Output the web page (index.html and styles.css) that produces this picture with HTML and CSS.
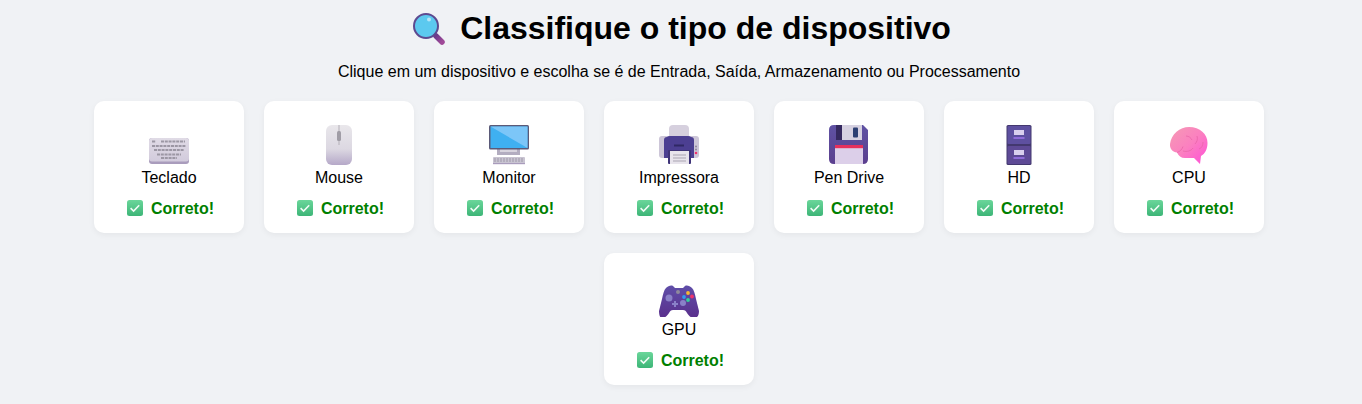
FILE: index.html

```html
<!DOCTYPE html>
<html lang="pt-BR">
<head>
    <meta charset="UTF-8">
    <title>Classifique o tipo de dispositivo</title>
    <meta name="viewport" content="width=device-width, initial-scale=1.0">
    <link rel="stylesheet" href="styles.css">
</head>
<body>
    <svg class="defs" aria-hidden="true">
        <defs>
            <linearGradient id="gCheck" x1="0" y1="0" x2="0" y2="1"><stop offset="0" stop-color="#6ad69a"/><stop offset="1" stop-color="#3db577"/></linearGradient>
            <linearGradient id="gKey" x1="0" y1="0" x2="0" y2="1"><stop offset="0" stop-color="#e0dbe6"/><stop offset="1" stop-color="#d2cbdc"/></linearGradient>
            <linearGradient id="gMouse" x1="0" y1="0" x2="0" y2="1"><stop offset="0" stop-color="#e9e7eb"/><stop offset=".6" stop-color="#dcd8e2"/><stop offset="1" stop-color="#b5a8c8"/></linearGradient>
            <linearGradient id="gPurple" x1="0" y1="0" x2="0" y2="1"><stop offset="0" stop-color="#5f52a3"/><stop offset="1" stop-color="#5b3f8f"/></linearGradient>
            <linearGradient id="gBrain" x1="0" y1="0" x2="1" y2="1"><stop offset="0" stop-color="#f59ab4"/><stop offset=".5" stop-color="#fb80c0"/><stop offset="1" stop-color="#ff4fd8"/></linearGradient>
            <linearGradient id="gPad" x1="0" y1="0" x2="0" y2="1"><stop offset="0" stop-color="#5f4ea8"/><stop offset="1" stop-color="#5a2f8c"/></linearGradient>
            <linearGradient id="gHandle" x1="0" y1="0" x2="1" y2="1"><stop offset="0" stop-color="#6d3a8c"/><stop offset="1" stop-color="#a04a98"/></linearGradient>
            <symbol id="check" viewBox="0 0 16 16">
                <rect width="16" height="16" rx="2.500" fill="url(#gCheck)"/>
                <path d="M3.600 8.200l3 2.900 5.600-5.800" fill="none" stroke="#f2fbf6" stroke-width="1.600"/>
            </symbol>
        </defs>
    </svg>

    <h1 class="title">
        <svg class="title-icon" viewBox="0 0 32 32">
            <path d="M23 23l6 6" stroke="url(#gHandle)" stroke-width="5.500" stroke-linecap="round"/>
            <circle cx="13" cy="13" r="12" fill="#5cc9ef" stroke="#5d4a90" stroke-width="2"/>
            <circle cx="16" cy="6.500" r="2" fill="#b5e6f8"/>
        </svg>
        <span>Classifique o tipo de dispositivo</span>
    </h1>
    <p class="subtitle">Clique em um dispositivo e escolha se é de Entrada, Saída, Armazenamento ou Processamento</p>

    <div class="devices">
        <div class="card">
            <svg class="icon" viewBox="0 0 40 40">
                <rect y="13" width="40" height="26" rx="3" fill="#a99cbc"/>
                <rect y="13" width="40" height="23.500" rx="3" fill="url(#gKey)"/>
                <path d="M3 16.500h4M12 16.500h24M3 21h34M5 25h30M8 29.500h24M12 33h16" stroke="#9c97a4" stroke-width="2.200" stroke-dasharray="3 .8"/>
            </svg>
            <div class="name">Teclado</div>
            <div class="status"><svg class="check"><use href="#check"/></svg><span>Correto!</span></div>
        </div>
        <div class="card">
            <svg class="icon" viewBox="0 0 40 40">
                <rect x="7" width="26" height="40" rx="6" fill="url(#gMouse)"/>
                <rect x="19.500" width="1" height="20" fill="#b3b0b8"/>
                <rect x="18" y="6" width="4" height="10" rx="1.500" fill="#a09da6"/>
            </svg>
            <div class="name">Mouse</div>
            <div class="status"><svg class="check"><use href="#check"/></svg><span>Correto!</span></div>
        </div>
        <div class="card">
            <svg class="icon" viewBox="0 0 40 40">
                <rect x="8" y="24" width="23" height="6" fill="#b3adc0"/>
                <rect x="11" y="24" width="17" height="3" fill="#d8d4de"/>
                <rect y="0" width="40" height="24.500" rx="1.500" fill="#5b5a78"/>
                <rect x="1.500" y="1.500" width="37" height="21.500" fill="#3fb0f1"/>
                <path d="M1.500 1.500h37v21.500z" fill="#7cc6f8"/>
                <rect x="4" y="32" width="32" height="7" rx="1" fill="#c9c4d2"/>
                <path d="M5 34h30M5 36h30" stroke="#9e99a8" stroke-dasharray="2 1"/>
                <rect x="4" y="38" width="32" height="1.200" fill="#a99cbc"/>
            </svg>
            <div class="name">Monitor</div>
            <div class="status"><svg class="check"><use href="#check"/></svg><span>Correto!</span></div>
        </div>
        <div class="card">
            <svg class="icon" viewBox="0 0 40 40">
                <path d="M10 12V4q0-4 4-4h12q4 0 4 4v8z" fill="#d6d0de"/>
                <rect x="0" y="11" width="40" height="22" rx="3" fill="#cdc6d8"/>
                <path d="M5 33V15q0-3 3-3 1-1 3-1h18q2 0 3 1 3 0 3 3v18z" fill="#4c3f92"/>
                <rect x="15" y="19.500" width="10" height="2" fill="#2f2864"/>
                <rect x="9" y="25" width="23" height="14" rx="1" fill="#3f3478"/>
                <rect x="11" y="26" width="19" height="13" fill="#e8e4ec"/>
                <path d="M14 30h13M14 33h13M14 36h13" stroke="#aaa5b2"/>
                <circle cx="37" cy="21.500" r="1" fill="#8d8799"/>
                <circle cx="37" cy="24.500" r="1" fill="#8d8799"/>
                <circle cx="37" cy="28" r="1.300" fill="#f0336c"/>
            </svg>
            <div class="name">Impressora</div>
            <div class="status"><svg class="check"><use href="#check"/></svg><span>Correto!</span></div>
        </div>
        <div class="card">
            <svg class="icon" viewBox="0 0 40 40">
                <path d="M5 0h29l5 5v29q0 5-5 5H5q-5 0-5-5V5q0-5 5-5z" fill="url(#gPurple)"/>
                <rect x="7" width="26" height="15" fill="#d6d1e1"/>
                <rect x="7" width="6" height="15" fill="#35295f"/>
                <rect x="24" y="2.500" width="5" height="10" rx="1" fill="#2c3f72"/>
                <rect x="6" y="20" width="28" height="19" fill="#dccfe9"/>
                <rect x="6" y="20" width="28" height="3.200" fill="#e8305c"/>
            </svg>
            <div class="name">Pen Drive</div>
            <div class="status"><svg class="check"><use href="#check"/></svg><span>Correto!</span></div>
        </div>
        <div class="card">
            <svg class="icon" viewBox="0 0 40 40">
                <rect x="7.500" y="0" width="25" height="40" rx="1.500" fill="#43386f"/>
                <rect x="8.500" y="1" width="23" height="18" rx="1" fill="#5e50a0"/>
                <rect x="8.500" y="21" width="23" height="18" rx="1" fill="#5e4a96"/>
                <rect x="15" y="5" width="10" height="5" fill="#d9cfee"/>
                <rect x="14.500" y="12" width="11" height="2" fill="#8f6cd8"/>
                <rect x="15" y="25" width="10" height="5" fill="#d9cfee"/>
                <rect x="14.500" y="32" width="11" height="2" fill="#8f6cd8"/>
            </svg>
            <div class="name">HD</div>
            <div class="status"><svg class="check"><use href="#check"/></svg><span>Correto!</span></div>
        </div>
        <div class="card">
            <svg class="icon" viewBox="0 0 40 40">
                <path d="M1 19C2 9 11 2 20 2 31 2 38.500 9 38.500 18 38.500 24 36 29 32 31L31 39 25 33H16C12 33 9.500 31 8 27.500 4 27 .5 24 1 19z" fill="url(#gBrain)"/>
                <path d="M8 27.500c3-1 5-3 6-6M14 26c4 1 8 0 10-3M17 11c3 0 5 2 6 4M28 11c1 3 0 6-2 8M34 17c0 3-1 6-4 7" fill="none" stroke="#e866a8" stroke-width=".8"/>
            </svg>
            <div class="name">CPU</div>
            <div class="status"><svg class="check"><use href="#check"/></svg><span>Correto!</span></div>
        </div>
        <div class="card">
            <svg class="icon" viewBox="0 0 40 40">
                <path d="M7 11c2-2 5-3 7-2l2 2h8l2-2c2-1 5 0 7 2 2 2 3 6 4 11l3 12c0 5-2 7-5 7-3 0-5-2-7-5-1-2-2-3-4-3H14c-2 0-3 1-4 3-2 3-4 5-7 5-2 0-3-3-3-7l3-12c1-5 2-9 4-11z" fill="url(#gPad)"/>
                <circle cx="10" cy="21" r="3.500" fill="#8a80c8"/>
                <circle cx="24" cy="26" r="3" fill="#8a80c8"/>
                <circle cx="19" cy="15" r="2" fill="#8f8a9c"/>
                <path d="M16 24v6M13 27h6" stroke="#8a80c8" stroke-width="2"/>
                <circle cx="25" cy="20" r="1.900" fill="#2f9cf0"/>
                <circle cx="29" cy="16" r="1.900" fill="#f5b932"/>
                <circle cx="33" cy="19.500" r="1.900" fill="#f0336c"/>
                <circle cx="29" cy="23" r="1.900" fill="#33d19a"/>
            </svg>
            <div class="name">GPU</div>
            <div class="status"><svg class="check"><use href="#check"/></svg><span>Correto!</span></div>
        </div>
    </div>
</body>
</html>
```

FILE: styles.css

```css
body {
    font-family: 'Liberation Sans', Arial, sans-serif;
    margin: 0;
    padding: 10px 4px 0 0;
    background-color: #f0f2f5;
    color: #000;
}

.defs {
    display: block;
    width: 0;
    height: 0;
}

.title {
    display: flex;
    justify-content: center;
    align-items: center;
    gap: 15px;
    margin: 0;
    font-size: 32px;
    line-height: 37px;
}

.title-icon {
    width: 32px;
    height: 32px;
    margin: 1px 0 0 6px;
}

.subtitle {
    margin: 16px 0 20px;
    font-size: 16px;
    line-height: 18px;
    text-align: center;
}

.devices {
    display: flex;
    flex-wrap: wrap;
    justify-content: center;
    gap: 20px;
    max-width: 1200px;
    margin: 0 auto;
    padding-bottom: 19px;
}

.card {
    width: 150px;
    box-sizing: border-box;
    padding: 24px 10px 15px;
    background: white;
    border-radius: 10px;
    box-shadow: 0 2px 6px rgba(0, 0, 0, 0.05);
    text-align: center;
}

.icon {
    display: block;
    width: 40px;
    height: 40px;
    margin: 0 auto;
}

.name {
    margin-top: 4px;
    font-size: 16px;
    line-height: 18px;
}

.status {
    display: flex;
    justify-content: center;
    align-items: center;
    gap: 8px;
    margin-top: 13px;
    padding-left: 3px;
    height: 18px;
    font-size: 16px;
    font-weight: bold;
    color: green;
}

.check {
    width: 16px;
    height: 16px;
    margin-bottom: 2px;
}
```
